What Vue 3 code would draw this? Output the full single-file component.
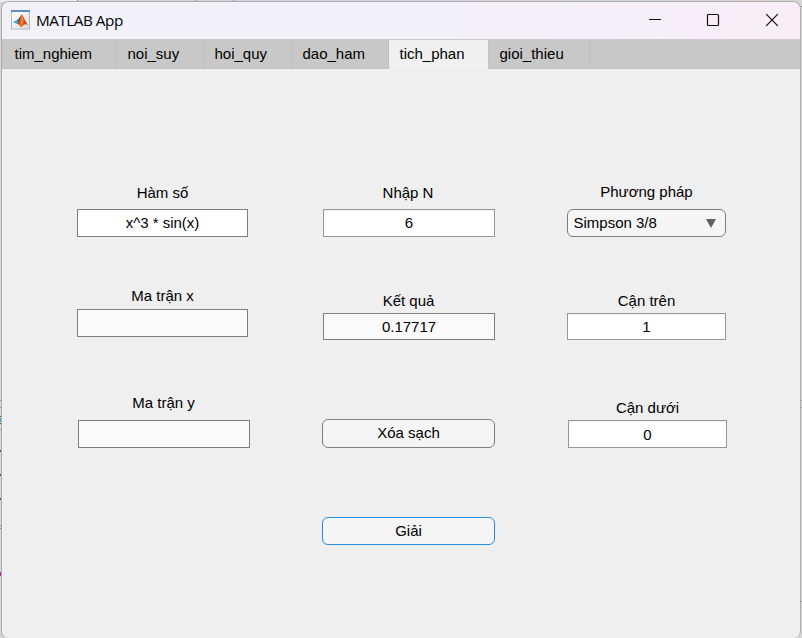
<script setup>
import { ref } from 'vue'

const tabs = [
  { name: 'tim_nghiem', width: 114 },
  { name: 'noi_suy', width: 87 },
  { name: 'hoi_quy', width: 88 },
  { name: 'dao_ham', width: 97 },
  { name: 'tich_phan', width: 100 },
  { name: 'gioi_thieu', width: 101 },
]
const active = ref('tich_phan')

const fn = ref('x^3 * sin(x)')
const n = ref('6')
const result = ref('0.17717')
const upper = ref('1')
const lower = ref('0')
</script>

<template>
  <div class="desktop">
    <svg class="behind" width="802" height="638" shape-rendering="crispEdges" aria-hidden="true">
      <rect width="802" height="638" fill="#d6d6d6" />
      <rect width="77" height="2" fill="#ededed" />
      <path d="M77.5 0v2M196.5 0v2M233.5 0v2" stroke="#8c8c8c" />
      <path d="M0 400.5h2M0 407.5h2M0 429.5h2M800 6.5h2M800 400.5h2M800 407.5h2M800 601.5h2" stroke="#999" />
      <path d="M0 416.5h2M0 423.5h2" stroke="#70503c" />
      <path d="M0 420h2" stroke="#55a7c8" stroke-width="4" />
      <path d="M0 451h2M0 475h2M0 499h2" stroke="#17679d" stroke-width="2" />
      <path d="M0 525h2M0 528.5h2" stroke="#a576ae" />
      <path d="M0 574h2" stroke="#b52a78" stroke-width="4" />
    </svg>
    <div class="window">
      <header class="titlebar">
        <svg class="logo" width="20" height="20" viewBox="0 0 20 20">
          <defs>
            <linearGradient id="flame" x1="0" x2="1">
              <stop offset="0" stop-color="#8c2a16" />
              <stop offset=".4" stop-color="#ee7a22" />
              <stop offset=".6" stop-color="#e8551c" />
              <stop offset="1" stop-color="#a82a12" />
            </linearGradient>
            <linearGradient id="paper" x1="0" y1="0" x2="1" y2="1">
              <stop offset="0" stop-color="#ffffff" />
              <stop offset="1" stop-color="#dcdcdc" />
            </linearGradient>
          </defs>
          <rect x=".5" y=".5" width="18" height="18.5" fill="url(#paper)" stroke="#b3b8be" />
          <rect x="0" y="0" width="19" height="2" fill="#5b8fc0" />
          <path d="M2 12 6.4 9.8 8.800 11.800 6 14z" fill="#4aa0cf" />
          <path d="M6.200 9.900C8.400 9 8.800 6 10.700 4.500L10 10.800 8 13z" fill="#28558c" />
          <path d="M10.700 4.300c1.900 1.200 3.600 7.800 6.300 10.700-2-1.200-3.500-.6-4.700.6-1 .9-1.800 1.700-2.900 1.700-.3-2-1.200-3.400-3.400-3.400C9 12.200 9.200 6.600 10.700 4.300z" fill="url(#flame)" />
          <path d="M10.900 5.500c.7 3 .4 6.500-1.500 9.700 2-1.300 3-4.700 2.500-7.700z" fill="#ffa531" />
        </svg>
        <h1>MATLAB App</h1>
        <div class="controls">
          <svg width="14" height="14" viewBox="0 0 14 14"><path d="M1 6.500h12" /></svg>
          <svg width="14" height="14" viewBox="0 0 14 14"><rect x="1.500" y="1.500" width="11" height="11" rx="1" /></svg>
          <svg width="14" height="14" viewBox="0 0 14 14"><path d="m1.200 1.200 11.600 11.600M12.800 1.200 1.200 12.800" /></svg>
        </div>
      </header>

      <nav class="tabs">
        <div
          v-for="tab in tabs"
          :key="tab.name"
          class="tab"
          :class="{ active: tab.name === active }"
          :style="{ width: tab.width + 'px' }"
          @click="active = tab.name"
        >{{ tab.name }}</div>
      </nav>

      <main class="panel">
        <section class="column first">
          <label class="field function"><span>Hàm số</span><input v-model="fn" class="text" /></label>
          <label class="field matrix-x"><span>Ma trận x</span><input class="text locked" readonly /></label>
          <label class="field matrix-y"><span>Ma trận y</span><input class="text locked" readonly /></label>
        </section>

        <section class="column second">
          <label class="field count"><span>Nhập N</span><input v-model="n" /></label>
          <label class="field result"><span>Kết quả</span><input v-model="result" class="text locked" readonly /></label>
          <button class="clear">Xóa sạch</button>
          <button class="solve">Giải</button>
        </section>

        <section class="column third">
          <div class="field method">
            <span>Phương pháp</span>
            <div class="dropdown">
              Simpson 3/8
              <svg width="10" height="9" viewBox="0 0 10 9"><path d="M0 0h10L5 9z" fill="#616161" /></svg>
            </div>
          </div>
          <label class="field upper"><span>Cận trên</span><input v-model="upper" /></label>
          <label class="field lower"><span>Cận dưới</span><input v-model="lower" /></label>
        </section>
      </main>
    </div>
  </div>
</template>

<style>
body {
  margin: 0;
  overflow: hidden;
}
</style>

<style scoped>
* {
  box-sizing: border-box;
}
.desktop {
  position: relative;
  width: 802px;
  height: 638px;
  padding: 1px 1px 0;
  font: 15px/18px "Liberation Sans", Arial, sans-serif;
  color: #000;
}
.behind {
  position: absolute;
  inset: 0;
}
.window {
  position: relative;
  display: flex;
  flex-direction: column;
  height: 637px;
  border: 1px solid #adadad;
  border-bottom: 0;
  border-radius: 8px 8px 7px 7px;
  background: #efefef;
  overflow: hidden;
}
.titlebar {
  flex: none;
  display: flex;
  align-items: center;
  height: 37px;
  padding: 0 21px 0 9px;
  background: linear-gradient(100deg, #f2f1f8 0%, #f2f0f8 55%, #f5eff7 82%, #f8edf5 100%);
}
.logo {
  flex: none;
  margin-top: -1px;
}
h1 {
  margin: -1px 0 0 5px;
  font: 400 15.300px/20px "Open Sans", "Noto Sans", sans-serif;
  letter-spacing: -0.500px;
  white-space: nowrap;
}
.controls {
  display: flex;
  gap: 44px;
  margin: -1px 0 0 auto;
}
.controls svg {
  fill: none;
  stroke: #111;
  stroke-width: 1.200;
}
.controls svg:last-child {
  margin-left: 1px;
}
.tabs {
  flex: none;
  display: flex;
  height: 30px;
  background: #c8c8c8;
  border-top: 1px solid #cbcbcf;
  padding-left: 1px;
  box-shadow: inset 0 -1px #c0c0c0;
}
.tab {
  padding: 5px 0 0 10.500px;
  border-right: 1px solid #bebebe;
}
.tab:first-child {
  padding-left: 11.500px;
}
.tab.active {
  background: #f0f0f0;
  border-right-color: #c2c2c2;
}
.panel {
  flex: 1;
  display: flex;
  align-items: flex-start;
  padding: 0 0 0 75px;
}
.column {
  display: flex;
  flex-direction: column;
}
.first {
  width: 173px;
  padding-top: 115px;
}
.second {
  width: 173px;
  margin-left: 72px;
  padding-top: 115px;
}
.third {
  width: 160px;
  margin-left: 72px;
  padding-top: 114px;
}
.field {
  display: flex;
  flex-direction: column;
  text-align: center;
}
.field span {
  height: 18px;
}
input {
  width: 100%;
  height: 28px;
  padding: 0;
  border: 1px solid #969696;
  border-radius: 0;
  outline: 0;
  background: #fff;
  box-shadow: inset 0 1px 1px #f1f1f1;
  font: inherit;
  color: #000;
  text-align: center;
}
.text {
  border-color: #7d7d7d;
  box-shadow: none;
}
.locked {
  background: #fafafa;
}
.function,
.matrix-x {
  width: 171px;
  gap: 7px;
}
.function input,
.count input {
  padding-bottom: 1px;
}
.matrix-x {
  margin-top: 50px;
  gap: 4px;
}
.matrix-y {
  width: 172px;
  margin: 57px 0 0 1px;
  gap: 8px;
}
.matrix-y span {
  margin-left: -1px;
}
.count {
  width: 172px;
  margin-left: 1px;
  gap: 7px;
}
.count span {
  margin-left: -2px;
}
.result span {
  margin-left: -1px;
}
.result {
  width: 172px;
  margin: 55px 0 0 1px;
  gap: 3px;
}
.result input,
.upper input {
  height: 27px;
}
button {
  height: 28px;
  padding: 0;
  border: 1px solid #7d7d7d;
  border-radius: 6px;
  background: #f5f5f5;
  font: inherit;
  color: #000;
}
.clear {
  height: 29px;
  margin-top: 79px;
  padding-bottom: 1px;
}
.solve {
  margin-top: 69px;
  border-color: #268cdd;
}
.method {
  width: 159px;
  gap: 8px;
}
.dropdown {
  display: flex;
  align-items: center;
  justify-content: space-between;
  height: 28px;
  padding: 0 9px 0 5.500px;
  border: 1px solid #7d7d7d;
  border-radius: 6px;
  background: #f5f5f5;
}
.upper {
  width: 159px;
  margin-top: 55px;
  gap: 3px;
}
.lower {
  width: 159px;
  margin: 59px 0 0 1px;
  gap: 3px;
}
.lower input {
  padding-top: 1px;
}
</style>
